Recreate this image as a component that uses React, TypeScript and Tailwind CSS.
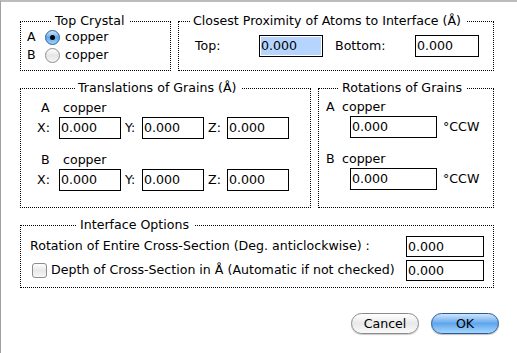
import React from 'react';

const font = "font-['Lucida_Grande','DejaVu_Sans',sans-serif]";

function Group({ title, titleLeft, className, children }: { title: string; titleLeft: string; className: string; children: React.ReactNode }) {
  return (
    <div className={`relative border border-dotted border-black ${className}`}>
      <div className={`absolute -top-[9px] ${titleLeft} bg-white pl-[3px] pr-[5px] text-[12.6px] leading-[16px] text-black`}>
        {title}
      </div>
      {children}
    </div>
  );
}

function Field({ value, w, h = 'h-[22px]', selected = false }: { value: string; w: string; h?: string; selected?: boolean }) {
  return (
    <div className={`${w} ${h} border border-black bg-white flex items-center px-[1px] text-[12.6px]`}>
      <span className={selected ? 'bg-[#b5d5ff] w-full leading-[18px]' : 'leading-[18px]'}>{value}</span>
    </div>
  );
}

function Radio({ on }: { on: boolean }) {
  return on ? (
    <div className="w-[15px] h-[15px] rounded-full border border-[#2d5d9c] bg-gradient-to-b from-[#cfe6fb] via-[#5fa8ec] to-[#9fd0fa] flex items-center justify-center">
      <div className="w-[5px] h-[5px] rounded-full bg-black" />
    </div>
  ) : (
    <div className="w-[15px] h-[15px] rounded-full border border-[#8d8d8d] bg-gradient-to-b from-[#fdfdfd] via-[#e6e6e6] to-[#f5f5f5]" />
  );
}

export default function App() {
  return (
    <div className={`w-[517px] h-[353px] bg-white border-t-2 border-l border-t-[#bcbcbc] border-l-[#a0a0a0] pt-[19px] pl-[19px] text-black text-[12.6px] ${font}`}>
      {/* row 1 */}
      <div className="flex gap-[7px]">
        <Group title="Top Crystal" titleLeft="left-[31px]" className="w-[151px] h-[50px]">
          <div className="pt-[7px] pl-[6px] flex flex-col gap-[1px]">
            <div className="flex items-center h-[17px]">
              <span className="w-[18px]">A</span>
              <Radio on />
              <span className="ml-[5px]">copper</span>
            </div>
            <div className="flex items-center h-[17px]">
              <span className="w-[18px]">B</span>
              <Radio on={false} />
              <span className="ml-[5px]">copper</span>
            </div>
          </div>
        </Group>
        <Group title="Closest Proximity of Atoms to Interface (Å)" titleLeft="left-[11px]" className="w-[316px] h-[50px]">
          <div className="pt-[13px] pl-[16px] flex items-center">
            <span className="w-[64px]">Top:</span>
            <Field value="0.000" w="w-[64px]" selected />
            <span className="ml-[12px] w-[80px]">Bottom:</span>
            <Field value="0.000" w="w-[64px]" />
          </div>
        </Group>
      </div>

      {/* row 2 */}
      <div className="flex gap-[7px] mt-[17px]">
        <Group title="Translations of Grains (Å)" titleLeft="left-[54px]" className="w-[291px] h-[120px]">
          <div className="pt-[11px] pl-[16px] flex flex-col gap-[13px]">
            {['A', 'B'].map((g) => (
              <div key={g} className="flex flex-col gap-[1px]">
                <div className="flex h-[16px] items-center ml-[4px]">
                  <span className="w-[22px]">{g}</span>
                  <span>copper</span>
                </div>
                <div className="flex items-center">
                  <span className="w-[22px]">X:</span>
                  <Field value="0.000" w="w-[62px]" />
                  <span className="ml-[4px] w-[17px]">Y:</span>
                  <Field value="0.000" w="w-[62px]" />
                  <span className="ml-[4px] w-[19px]">Z:</span>
                  <Field value="0.000" w="w-[62px]" />
                </div>
              </div>
            ))}
          </div>
        </Group>
        <Group title="Rotations of Grains" titleLeft="left-[20px]" className="w-[176px] h-[120px]">
          <div className="pt-[10px] pl-[7px] flex flex-col gap-[13px]">
            {['A', 'B'].map((g) => (
              <div key={g} className="flex flex-col gap-[1px]">
                <div className="flex h-[16px] items-center">
                  <span className="w-[16px]">{g}</span>
                  <span>copper</span>
                </div>
                <div className="flex items-center ml-[24px]">
                  <Field value="0.000" w="w-[87px]" />
                  <span className="ml-[6px]">°CCW</span>
                </div>
              </div>
            ))}
          </div>
        </Group>
      </div>

      {/* row 3 */}
      <Group title="Interface Options" titleLeft="left-[56px]" className="w-[474px] h-[63px] mt-[17px]">
        <div className="pt-[10px] pl-[9px] pr-[9px] flex flex-col gap-[3px]">
          <div className="flex items-center justify-between">
            <span>Rotation of Entire Cross-Section (Deg. anticlockwise) :</span>
            <Field value="0.000" w="w-[78px]" h="h-[21px]" />
          </div>
          <div className="flex items-center justify-between">
            <div className="flex items-center">
              <div className="ml-[2px] w-[15px] h-[15px] rounded-[3px] border border-[#8d8d8d] bg-gradient-to-b from-[#fdfdfd] via-[#e8e8e8] to-[#f6f6f6]" />
              <span className="ml-[4px]">Depth of Cross-Section in Å (Automatic if not checked)</span>
            </div>
            <Field value="0.000" w="w-[78px]" h="h-[21px]" />
          </div>
        </div>
      </Group>

      {/* buttons */}
      <div className="flex justify-end gap-[12px] mt-[25px] pr-[18px]">
        <button className="w-[68px] h-[21px] rounded-full border border-[#8a8a8a] bg-gradient-to-b from-[#ffffff] via-[#e9e9e9] to-[#fafafa] text-[12.6px] leading-[19px] shadow-[0_1px_1px_rgba(0,0,0,0.2)]">
          Cancel
        </button>
        <button className="w-[68px] h-[21px] rounded-full border border-[#2b5a98] bg-gradient-to-b from-[#cfe5fb] via-[#5ea6ec] to-[#a6d6fd] text-[12.6px] leading-[19px] shadow-[0_1px_1px_rgba(0,0,0,0.25)]">
          OK
        </button>
      </div>
    </div>
  );
}
